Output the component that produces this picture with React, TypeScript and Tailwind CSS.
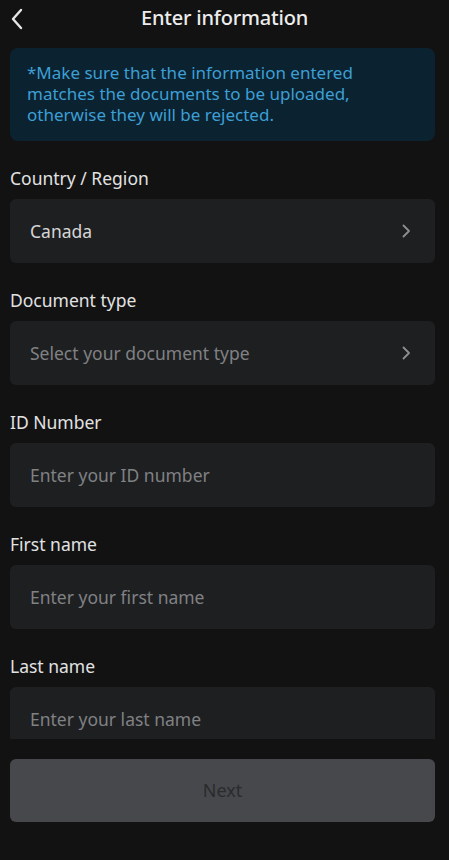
import React from "react";

const ChevronRight = () => (
  <svg width="10" height="16" viewBox="0 0 10 16" fill="none" className="shrink-0">
    <path d="M2.5 2.5l5.5 5.5-5.5 5.5" stroke="#8d8e91" strokeWidth="1.8" strokeLinecap="round" strokeLinejoin="round" />
  </svg>
);

interface Field {
  label: string;
  placeholder?: string;
  value?: string;
  select?: boolean;
}

const fields: Field[] = [
  { label: "Country / Region", value: "Canada", select: true },
  { label: "Document type", placeholder: "Select your document type", select: true },
  { label: "ID Number", placeholder: "Enter your ID number" },
  { label: "First name", placeholder: "Enter your first name" },
  { label: "Last name", placeholder: "Enter your last name" },
];

const App: React.FC = () => {
  return (
    <div
      className="w-[449px] h-[860px] bg-[#121212] flex flex-col overflow-hidden"
      style={{ fontFamily: '"Noto Sans", "Open Sans", sans-serif' }}
    >
      {/* Header */}
      <div className="relative h-[36px] flex items-center justify-center shrink-0">
        <button className="absolute left-[8px] top-[6px] p-[2px]">
          <svg width="14" height="22" viewBox="0 0 14 22" fill="none">
            <path d="M11 2L3 11l8 9" stroke="#e6e6e6" strokeWidth="2.4" strokeLinecap="round" strokeLinejoin="round" />
          </svg>
        </button>
        <h1 className="text-[20px] text-[#ececec] font-medium tracking-[-0.2px]">Enter information</h1>
      </div>

      {/* Scroll area */}
      <div className="h-[703px] overflow-hidden pl-[10px] pr-[14px] pt-[12px] shrink-0">
        <div className="bg-[#0b2231] rounded-[8px] px-[17px] pt-[14px] pb-[16px] text-[#3d9fd4] text-[17px] leading-[21px]">
          *Make sure that the information entered
          <br />
          matches the documents to be uploaded,
          <br />
          otherwise they will be rejected.
        </div>

        <div className="flex flex-col mt-[26px] gap-[26px]">
          {fields.map((f) => (
            <div key={f.label}>
              <div className="text-[17.5px] text-[#e2e2e2] leading-[22px] mb-[10px]">{f.label}</div>
              <div className="h-[64px] bg-[#1e1f21] rounded-[6px] flex items-center justify-between pl-[20px] pr-[24px]">
                <span className={`text-[17.5px] ${f.value ? "text-[#d6d6d6]" : "text-[#808184]"}`}>
                  {f.value ?? f.placeholder}
                </span>
                {f.select && <ChevronRight />}
              </div>
            </div>
          ))}
        </div>
      </div>

      {/* Footer */}
      <div className="pl-[10px] pr-[14px] pt-[20px]">
        <button className="w-full h-[63px] bg-[#47484c] rounded-[6px] text-[18px] text-[#2a2b2d]">Next</button>
      </div>
    </div>
  );
};

export default App;
